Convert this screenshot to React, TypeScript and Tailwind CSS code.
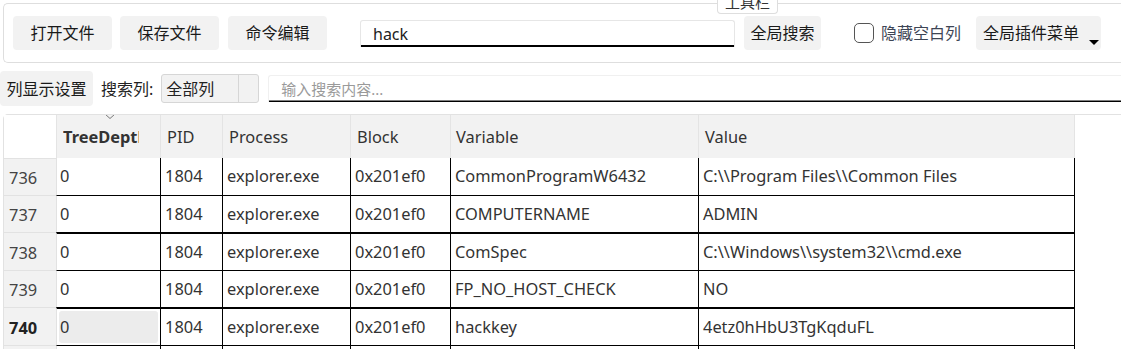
import React from "react";

const font = { fontFamily: '"Noto Sans", "Noto Sans CJK SC", sans-serif' };

const rows = [
  { n: "736", d: "0", pid: "1804", p: "explorer.exe", b: "0x201ef0", v: "CommonProgramW6432", val: "C:\\\\Program Files\\\\Common Files", h: "h-[37px]", top: "border-t-0" },
  { n: "737", d: "0", pid: "1804", p: "explorer.exe", b: "0x201ef0", v: "COMPUTERNAME", val: "ADMIN", h: "h-[37px]", top: "border-t" },
  { n: "738", d: "0", pid: "1804", p: "explorer.exe", b: "0x201ef0", v: "ComSpec", val: "C:\\\\Windows\\\\system32\\\\cmd.exe", h: "h-[38px]", top: "border-t-2" },
  { n: "739", d: "0", pid: "1804", p: "explorer.exe", b: "0x201ef0", v: "FP_NO_HOST_CHECK", val: "NO", h: "h-[37px]", top: "border-t" },
  { n: "740", d: "0", pid: "1804", p: "explorer.exe", b: "0x201ef0", v: "hackkey", val: "4etz0hHbU3TgKqduFL", h: "h-[38px]", top: "border-t-2" },
];

function Btn({ children, className = "" }: { children: React.ReactNode; className?: string }) {
  return (
    <div className={`flex h-[34px] items-center justify-center rounded-[4px] bg-[#f2f2f2] text-[16px] text-[#1a1a1a] ${className}`}>
      {children}
    </div>
  );
}

export default function App() {
  return (
    <div className="relative h-[349px] w-[1121px] overflow-hidden bg-white text-[#333]" style={font}>
      {/* toolbar group */}
      <div className="pl-[3px] pt-[3px]">
        <div className="relative flex h-[60px] items-center rounded-l-[5px] border border-r-0 border-[#dedede] pl-[9px]">
          <div className="absolute left-[713px] top-[-12px] flex h-[22px] w-[61px] items-end justify-center overflow-hidden rounded-b-[4px] border border-t-0 border-[#dedede] bg-white text-[15px] leading-[20px] text-[#333]">
            <span className="relative top-[-1px]">工具栏</span>
          </div>
          <Btn className="w-[99px]">打开文件</Btn>
          <Btn className="ml-[8px] w-[99px]">保存文件</Btn>
          <Btn className="ml-[9px] w-[99px]">命令编辑</Btn>
          <div className="ml-[33px] flex h-[27px] w-[375px] items-center rounded-t-[3px] border border-b-0 border-[#e6e6e6] pl-[12px] text-[16px] text-[#222] shadow-[inset_0_-2px_0_#000]">
            hack
          </div>
          <Btn className="ml-[9px] w-[77px]">全局搜索</Btn>
          <div className="ml-[33px] h-[20px] w-[20px] rounded-[5px] border border-[#555]" />
          <span className="ml-[7px] text-[16px] text-[#3d4555]">隐藏空白列</span>
          <Btn className="relative ml-[15px] w-[125px] justify-start pl-[7px]">
            全局插件菜单
            <span className="absolute left-[113px] top-[24px] h-0 w-0 border-x-[5px] border-t-[5px] border-x-transparent border-t-black" />
          </Btn>
        </div>
      </div>

      {/* second row */}
      <div className="mt-[8px] flex h-[35px] items-center">
        <Btn className="h-[35px] w-[93px]">列显示设置</Btn>
        <span className="ml-[8px] text-[16px] text-[#222]">搜索列:</span>
        <div className="ml-[8px] flex h-[29px] w-[98px] items-center rounded-[3px] border border-[#d6d6d6] bg-[#f2f2f2]">
          <span className="w-[76px] pl-[4px] text-[16px] text-[#222]">全部列</span>
          <div className="h-full border-l border-[#d6d6d6]" />
        </div>
        <div className="ml-[9px] flex h-[27px] flex-1 items-center rounded-tl-[3px] border-l border-t border-[#f0f0f0] pl-[12px] text-[15px] text-[#9a9a9a] shadow-[inset_0_-1.5px_0_#000]">
          输入搜索内容...
        </div>
      </div>

      {/* table */}
      <div className="ml-[3px] mt-[8px] rounded-tl-[5px] border-l border-t border-[#e2e2e2]">
        <div className="flex h-[43px] text-[16.4px]">
          <div className="w-[52px] bg-white" />
          <div className="relative flex w-[105px] items-center overflow-hidden whitespace-nowrap border-x border-[#e4e4e4] bg-[#f2f2f2] pl-[6px] font-bold text-[#333]">
            <span className="absolute left-[47px] top-[-2px]">
              <svg width="12" height="7" viewBox="0 0 12 7"><path d="M1 1l5 4.5L11 1" fill="none" stroke="#777" strokeWidth="1" /></svg>
            </span>
            <span className="relative top-[1px] w-[76px] overflow-hidden">TreeDepth</span>
          </div>
          <div className="flex w-[62px] items-center border-r border-[#e4e4e4] bg-[#f2f2f2] pl-[6px] pt-[1px]">PID</div>
          <div className="flex w-[128px] items-center border-r border-[#e4e4e4] bg-[#f2f2f2] pl-[6px] pt-[1px]">Process</div>
          <div className="flex w-[100px] items-center border-r border-[#e4e4e4] bg-[#f2f2f2] pl-[6px] pt-[1px]">Block</div>
          <div className="flex w-[248px] items-center border-r border-[#e4e4e4] bg-[#f2f2f2] pl-[5px] pt-[1px]">Variable</div>
          <div className="flex w-[376px] items-center border-r border-[#e4e4e4] bg-[#f2f2f2] pl-[6px] pt-[1px]">Value</div>
        </div>
        {rows.map((r, i) => (
          <div key={r.n} className="flex text-[16.4px] text-[#333]">
            <div
              className={`flex w-[52px] items-center border-t border-[#e2e2e2] bg-[#f2f2f2] pl-[5px] pt-[3px] ${
                i === 4 ? "font-bold text-[#222]" : "text-[#444]"
              }`}
            >
              {r.n}
            </div>
            <div className={`flex ${r.h} border-l border-l-[#e2e2e2] border-t-black ${r.top}`}>
              <div className="flex w-[104px] items-center border-r border-black p-[2px]">
                <div className={`flex h-full w-full items-center rounded-[3px] pl-[1px] ${i === 4 ? "bg-[#ececec]" : ""}`}>{r.d}</div>
              </div>
              <div className="flex w-[62px] items-center border-r border-black pl-[4px]">{r.pid}</div>
              <div className="flex w-[128px] items-center border-r border-black pl-[4px]">{r.p}</div>
              <div className="flex w-[100px] items-center border-r border-black pl-[4px]">{r.b}</div>
              <div className="flex w-[248px] items-center border-r border-black pl-[4px]">{r.v}</div>
              <div className="flex w-[376px] items-center border-r border-black pl-[4px]">{r.val}</div>
            </div>
          </div>
        ))}
        <div className="flex h-[10px]">
          <div className="w-[52px] border-t border-[#e2e2e2] bg-[#f2f2f2]" />
          <div className="flex border-l border-t border-black border-l-[#e2e2e2]">
            <div className="w-[104px] border-r border-black" />
            <div className="w-[62px] border-r border-black" />
            <div className="w-[128px] border-r border-black" />
            <div className="w-[100px] border-r border-black" />
            <div className="w-[248px] border-r border-black" />
            <div className="w-[376px] border-r border-black" />
          </div>
        </div>
      </div>
    </div>
  );
}
